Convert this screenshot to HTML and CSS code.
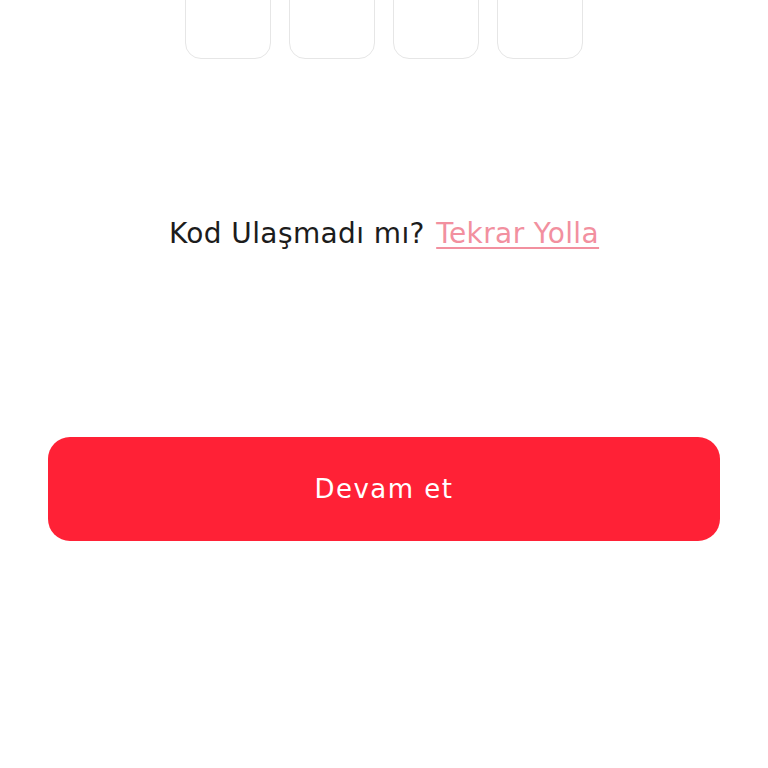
FILE: index.html
```html
<!DOCTYPE html>
<html>
  <head>
    <meta name="viewport" content="width=device-width, initial-scale=1">
    <link rel="stylesheet" href="styles.css">
  </head>
  <body>
    <div class="screen">
      <div class="code">
        <input type="text" maxlength="1" class="digit">
        <input type="text" maxlength="1" class="digit">
        <input type="text" maxlength="1" class="digit">
        <input type="text" maxlength="1" class="digit">
      </div>

      <p class="resend">
        Kod Ulaşmadı mı? <a href="#" class="again">Tekrar Yolla</a>
      </p>

      <button class="submit">Devam et</button>
    </div>
  </body>
</html>
```

FILE: styles.css
```css
body { margin: 0; background: #fff; font-family: "DejaVu Sans", "Open Sans", sans-serif; color: #1c1c1c }
.screen { display: flex; flex-direction: column; align-items: center; padding: 0 48px }
.code { display: flex; gap: 18px; margin-top: -27px }
.digit { width: 86px; height: 86px; box-sizing: border-box; border: 1.5px solid #e6e6e6; border-radius: 16px; background: #fff; outline: none }
.resend { margin: 159px 0 0; font-size: 28px; line-height: 32px; letter-spacing: 0.4px }
.again { color: #f2909f; margin-left: 2px; text-decoration-thickness: 2px; text-underline-offset: 4px }
.submit { margin-top: 187px; width: 100%; height: 104px; border: none; border-radius: 22px; background: #ff2136; color: #fff; font-family: inherit; font-size: 26px; font-weight: 500; letter-spacing: 1.5px }
```
